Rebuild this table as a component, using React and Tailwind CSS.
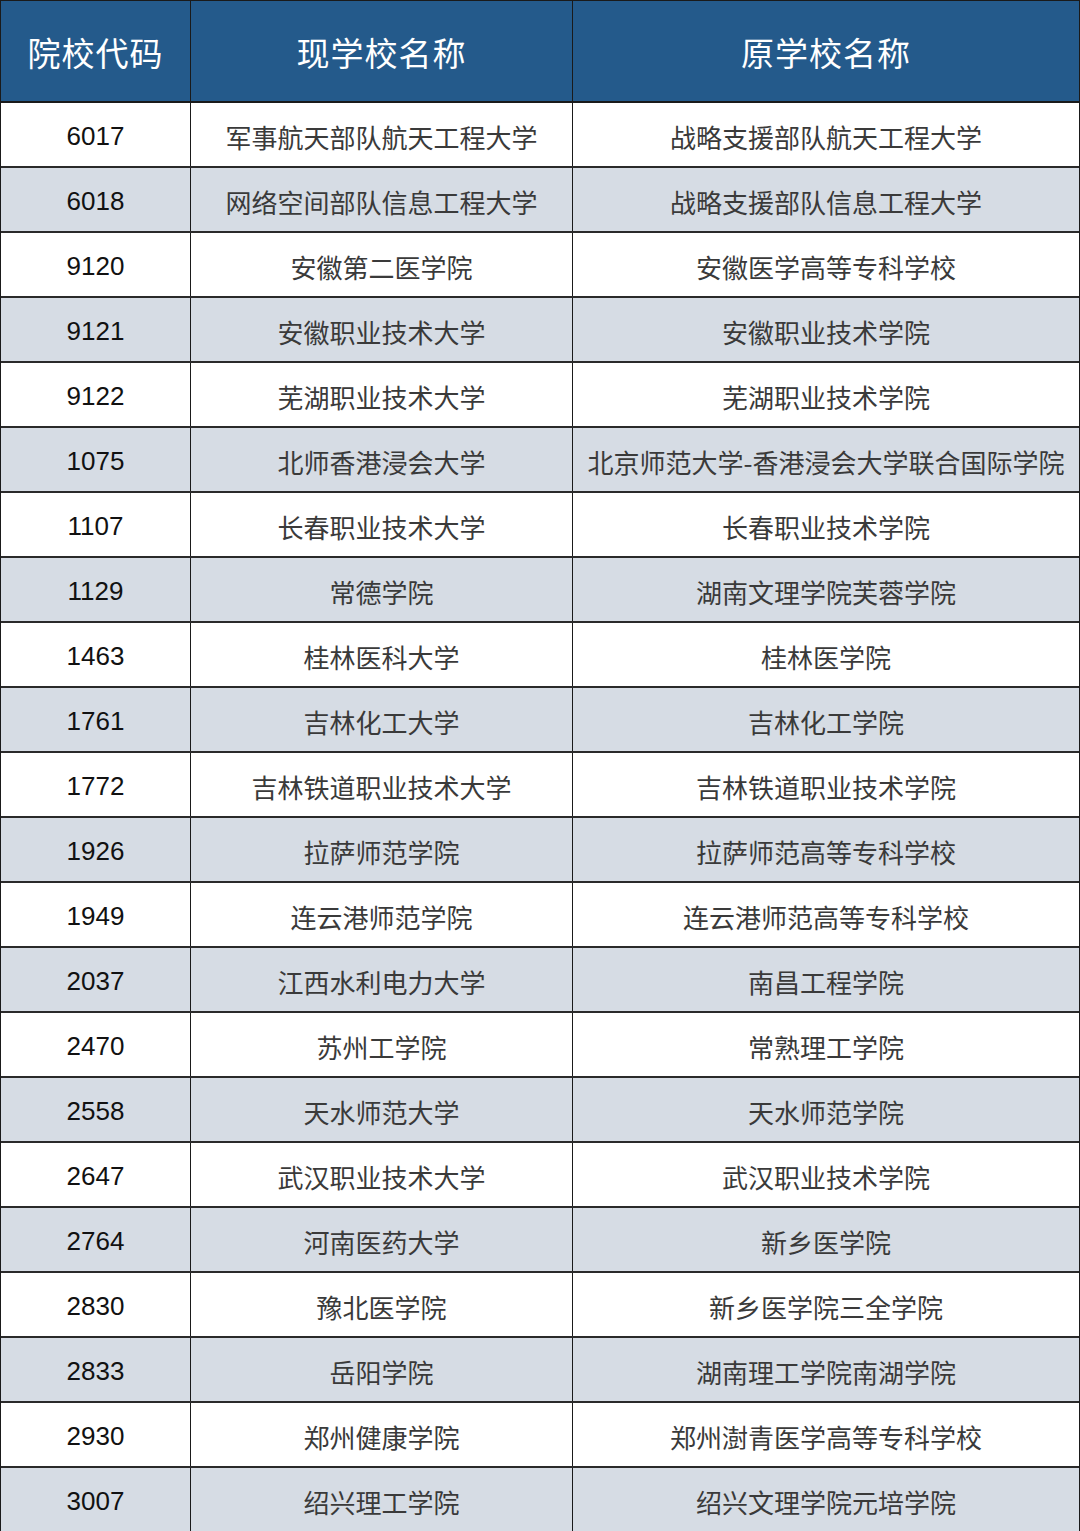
const rows = [
  ["6017", "军事航天部队航天工程大学", "战略支援部队航天工程大学"],
  ["6018", "网络空间部队信息工程大学", "战略支援部队信息工程大学"],
  ["9120", "安徽第二医学院", "安徽医学高等专科学校"],
  ["9121", "安徽职业技术大学", "安徽职业技术学院"],
  ["9122", "芜湖职业技术大学", "芜湖职业技术学院"],
  ["1075", "北师香港浸会大学", "北京师范大学-香港浸会大学联合国际学院"],
  ["1107", "长春职业技术大学", "长春职业技术学院"],
  ["1129", "常德学院", "湖南文理学院芙蓉学院"],
  ["1463", "桂林医科大学", "桂林医学院"],
  ["1761", "吉林化工大学", "吉林化工学院"],
  ["1772", "吉林铁道职业技术大学", "吉林铁道职业技术学院"],
  ["1926", "拉萨师范学院", "拉萨师范高等专科学校"],
  ["1949", "连云港师范学院", "连云港师范高等专科学校"],
  ["2037", "江西水利电力大学", "南昌工程学院"],
  ["2470", "苏州工学院", "常熟理工学院"],
  ["2558", "天水师范大学", "天水师范学院"],
  ["2647", "武汉职业技术大学", "武汉职业技术学院"],
  ["2764", "河南医药大学", "新乡医学院"],
  ["2830", "豫北医学院", "新乡医学院三全学院"],
  ["2833", "岳阳学院", "湖南理工学院南湖学院"],
  ["2930", "郑州健康学院", "郑州澍青医学高等专科学校"],
  ["3007", "绍兴理工学院", "绍兴文理学院元培学院"],
];

const cjk = "font-['Noto_Sans_CJK_SC',sans-serif]";

export default function App() {
  return (
    <div className="w-[1080px] bg-white">
      <div className="border-l border-r border-t border-[#1a1a1a]">
        <div className={`grid grid-cols-[190px_382px_1fr] h-[102px] bg-[#245a8b] border-b-2 border-[#1a1a1a] text-white text-[33px] ${cjk}`}>
          <div className="flex items-center justify-center pt-[4px] border-r border-[#1a1a1a] tracking-[1px]">院校代码</div>
          <div className="flex items-center justify-center pt-[4px] border-r border-[#1a1a1a] tracking-[1px]">现学校名称</div>
          <div className="flex items-center justify-center pt-[4px] tracking-[1px]">原学校名称</div>
        </div>
        {rows.map(([code, now, old], index) => (
          <div
            key={index}
            className={`grid grid-cols-[190px_382px_1fr] h-[65px] border-b-2 border-[#2a2a2a] ${index % 2 === 1 ? "bg-[#d6dce4]" : "bg-white"}`}
          >
            <div className="flex items-center justify-center pt-[4px] border-r border-[#1a1a1a] text-[26px] text-[#111] font-['Liberation_Sans',Arial,sans-serif]">
              {code}
            </div>
            <div className={`flex items-center justify-center pt-[4px] border-r border-[#1a1a1a] text-[26px] text-[#3a3a3a] ${cjk}`}>
              {now}
            </div>
            <div className={`flex items-center justify-center pt-[4px] text-[26px] text-[#3a3a3a] ${cjk}`}>
              {old}
            </div>
          </div>
        ))}
      </div>
    </div>
  );
}
